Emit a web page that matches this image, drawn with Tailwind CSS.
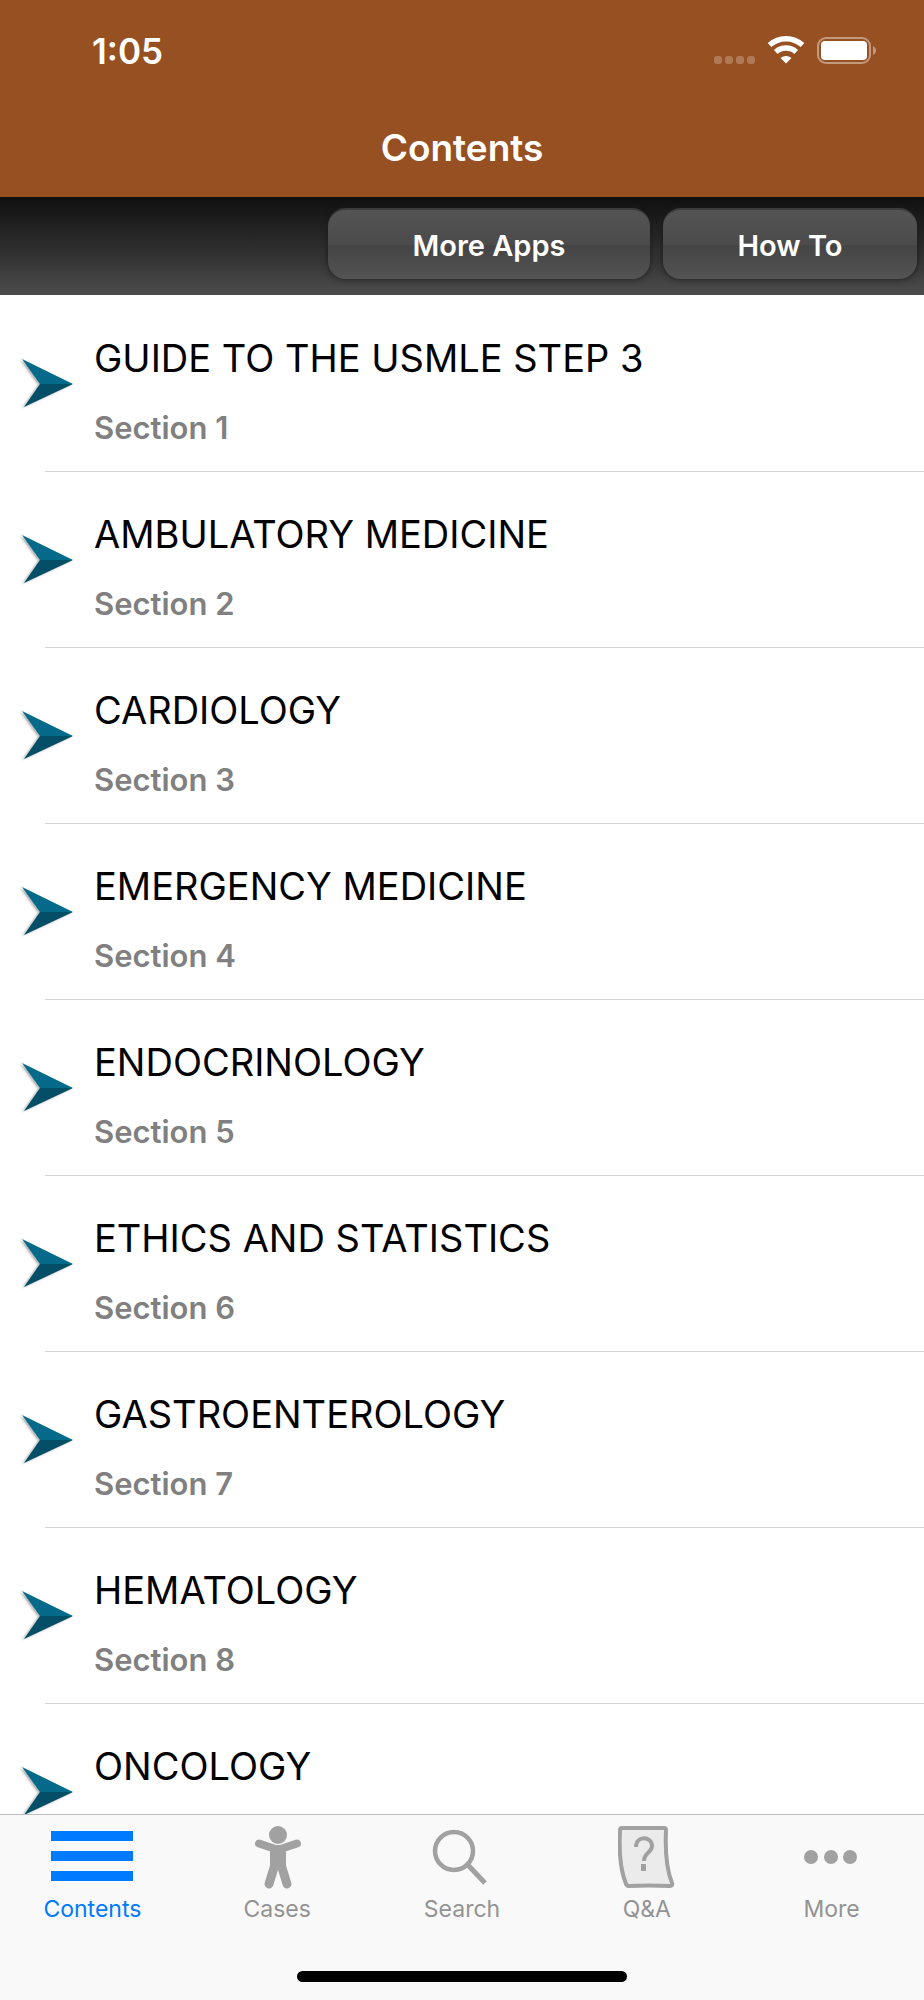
<!DOCTYPE html>
<html lang="en">
<head>
    <meta charset="UTF-8">
    <meta name="viewport" content="width=device-width, initial-scale=1.0">
    <title>Contents</title>
    <script src="https://cdn.jsdelivr.net/npm/@tailwindcss/browser@4"></script>
</head>
<body class="h-screen flex flex-col bg-white font-['Inter',sans-serif] text-black">
    <!-- Status bar + title -->
    <header class="bg-[#965022] text-white">
        <div class="flex items-center justify-between h-[102px] pl-[92px] pr-[47px]">
            <span class="text-[35px] font-semibold">1:05</span>
            <div class="flex items-center">
                <svg class="w-[42px] h-8" viewBox="0 0 42 32" fill="#b07a56">
                    <rect x="1" y="21" width="8" height="8" rx="3"/>
                    <rect x="12" y="21" width="8" height="8" rx="3"/>
                    <rect x="23" y="21" width="8" height="8" rx="3"/>
                    <rect x="34" y="21" width="8" height="8" rx="3"/>
                </svg>
                <svg class="w-[38px] h-8 ml-3" viewBox="0 0 38 32" fill="none" stroke="#fff" stroke-width="5.500">
                    <path d="M2.500 10C12 1.500 26 1.500 35.500 10"/>
                    <path d="M8.800 17C14.500 11.800 23.500 11.800 29.200 17"/>
                    <path d="M19 28.500l-5.500-5.500c3-2.800 8-2.800 11 0z" fill="#fff" stroke="none"/>
                </svg>
                <svg class="w-[60px] h-8 ml-3" viewBox="0 0 60 32">
                    <rect x="1" y="3" width="52" height="25" rx="8" fill="none" stroke="#c19a80" stroke-width="2"/>
                    <rect x="4" y="6" width="46" height="19" rx="4" fill="#fff"/>
                    <path d="M56 11c4 2 4 7 0 9z" fill="#c19a80"/>
                </svg>
            </div>
        </div>
        <h1 class="h-[95px] pt-[22px] text-center text-[37px] leading-[48px] font-semibold">Contents</h1>
    </header>

    <!-- Toolbar -->
    <div class="flex justify-end gap-[13px] h-[98px] pt-[11px] pr-[7px] bg-linear-to-b from-[#101010] to-[#4c4c4c]">
        <button class="w-[322px] h-[71px] pt-0.5 rounded-[18px] border-t-2 border-[#3c3c3c] shadow-[0_0_6px_#1a1a1a] bg-[linear-gradient(#545454,#4b4b4b_50%,#444444_52%,#545454)] text-white text-[29px] font-semibold">More Apps</button>
        <button class="w-[254px] h-[71px] pt-0.5 rounded-[18px] border-t-2 border-[#3c3c3c] shadow-[0_0_6px_#1a1a1a] bg-[linear-gradient(#545454,#4b4b4b_50%,#444444_52%,#545454)] text-white text-[29px] font-semibold">How To</button>
    </div>

    <!-- Sections -->
    <main class="flex-1 min-h-0 overflow-hidden pt-px">
        <svg class="hidden">
            <symbol id="arrow" viewBox="0 0 56 56">
                <path d="M2 3L53 28H20z" fill="#046a8a"/>
                <path d="M4 51L53 28H20z" fill="#044f68"/>
            </symbol>
        </svg>
        <ul id="sections"></ul>
    </main>

    <!-- Tab bar -->
    <nav class="h-[186px] flex flex-col justify-between items-center border-t border-[#bdbdbd] bg-[#f9f9f9]">
        <div class="w-full grid grid-cols-5 pt-2 text-center text-[23px] leading-7 text-[#939393]">
            <a href="#" class="flex flex-col items-center gap-1 text-[#007aff]">
                <svg class="w-[82px] h-[68px]" viewBox="0 0 82 68" fill="currentColor">
                    <path d="M0 8h82v10H0zM0 28h82v10H0zM0 48h82v10H0z"/>
                </svg>
                Contents
            </a>
            <a href="#" class="flex flex-col items-center gap-1">
                <svg class="w-[50px] h-[68px]" viewBox="0 0 50 68" fill="#a1a1a1" stroke="#a1a1a1" stroke-linecap="round" stroke-linejoin="round">
                    <circle cx="26" cy="12" r="9" stroke="none"/>
                    <path d="M7 20.500l15 5M45 20.500l-15 5" stroke-width="8" fill="none"/>
                    <path d="M19 23h14v22H19z" stroke-width="2"/>
                    <path d="M22.500 43L17 61M29.500 43L35 61" stroke-width="9" fill="none"/>
                </svg>
                Cases
            </a>
            <a href="#" class="flex flex-col items-center gap-1">
                <svg class="w-14 h-[68px] overflow-visible" viewBox="0 0 56 68" fill="none" stroke="#a1a1a1">
                    <circle cx="20" cy="28" r="19" stroke-width="4.500"/>
                    <path d="M33 41l18 19" stroke-width="5"/>
                </svg>
                Search
            </a>
            <a href="#" class="flex flex-col items-center gap-1">
                <svg class="w-[58px] h-[68px]" viewBox="0 0 58 68" fill="none" stroke="#a1a1a1">
                    <path d="M4 5h42q2 0 2 2c-1 22 0 38 6 53q1 3-2 3-22-1-41 0-2 0-3-2C2 46 1 25 2 7q0-2 2-2z" fill="#ebebeb" stroke-width="4"/>
                    <path d="M18 24c0-12 16-11 16-1 0 7-8 6-8 15" stroke-width="4"/>
                    <path d="M23 41h5v7h-5z" fill="#a1a1a1" stroke="none"/>
                </svg>
                Q&amp;A
            </a>
            <a href="#" class="flex flex-col items-center gap-1">
                <svg class="w-14 h-[68px]" viewBox="0 0 56 68" fill="#a1a1a1">
                    <circle cx="7" cy="34" r="7"/>
                    <circle cx="27" cy="34" r="7"/>
                    <circle cx="46" cy="34" r="7"/>
                </svg>
                More
            </a>
        </div>
        <div class="w-[330px] h-[11px] mb-[18px] rounded-full bg-black"></div>
    </nav>

    <script>
        const titles = [
            'GUIDE TO THE USMLE STEP 3',
            'AMBULATORY MEDICINE',
            'CARDIOLOGY',
            'EMERGENCY MEDICINE',
            'ENDOCRINOLOGY',
            'ETHICS AND STATISTICS',
            'GASTROENTEROLOGY',
            'HEMATOLOGY',
            'ONCOLOGY'
        ];

        document.getElementById('sections').innerHTML = titles.map((title, i) => `
            <li class="pl-5">
                <a href="#" class="flex items-center h-44">
                    <svg class="w-14 h-14 drop-shadow-[-2px_1px_1px_rgba(0,0,0,0.3)]"><use href="#arrow"/></svg>
                    <div class="flex-1 h-full ml-[18px] pt-9">
                        <div class="text-[38px] leading-[52px]">${title}</div>
                        <div class="mt-6 text-[31px] leading-10 font-semibold text-[#808080]">Section ${i + 1}</div>
                    </div>
                </a>
                <div class="h-px -mt-px ml-[25px] bg-[#d4d4d4]"></div>
            </li>`).join('');
    </script>
</body>
</html>
